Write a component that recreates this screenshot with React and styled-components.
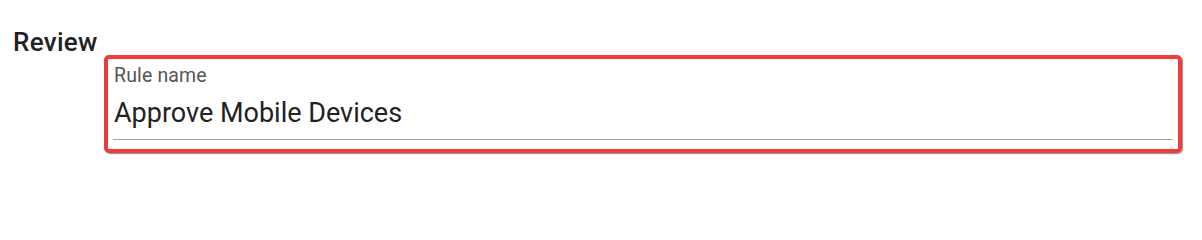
import React from "react";
import styled, { createGlobalStyle } from "styled-components";

const GlobalStyle = createGlobalStyle`
  html, body {
    margin: 0;
    padding: 0;
    background: #ffffff;
  }

  body {
    font-family: Roboto, "Liberation Sans", Arial, sans-serif;
    color: #222222;
  }
`;

const Page = styled.div`
  width: 1202px;
  height: 204px;
  box-sizing: border-box;
  padding: 30px 0 0 13px;
`;

const Heading = styled.h2`
  margin: 0;
  font-size: 26px;
  font-weight: 500;
  line-height: 25px;
  letter-spacing: 0.3px;
  color: #222222;
`;

const Highlight = styled.div`
  margin-left: 91px;
  width: 1078px;
  box-sizing: border-box;
  padding: 7px 5px 9px;
  border: 4px solid #ec3d3d;
  border-radius: 5px;
  box-shadow: 1px 1px 1px rgba(0, 0, 0, 0.45);
`;

const Label = styled.label`
  display: block;
  font-size: 19.5px;
  line-height: 19px;
  letter-spacing: 0.15px;
  color: #555555;
  padding-left: 1px;
`;

const Value = styled.div`
  margin-top: 15px;
  padding-bottom: 12px;
  padding-left: 1px;
  font-size: 27px;
  line-height: 27px;
  color: #222222;
  border-bottom: 1px solid #a8a8a8;
`;

export default function App() {
  return (
    <>
      <GlobalStyle />
      <Page>
        <Heading>Review</Heading>
        <Highlight>
          <Label>Rule name</Label>
          <Value>Approve Mobile Devices</Value>
        </Highlight>
      </Page>
    </>
  );
}
